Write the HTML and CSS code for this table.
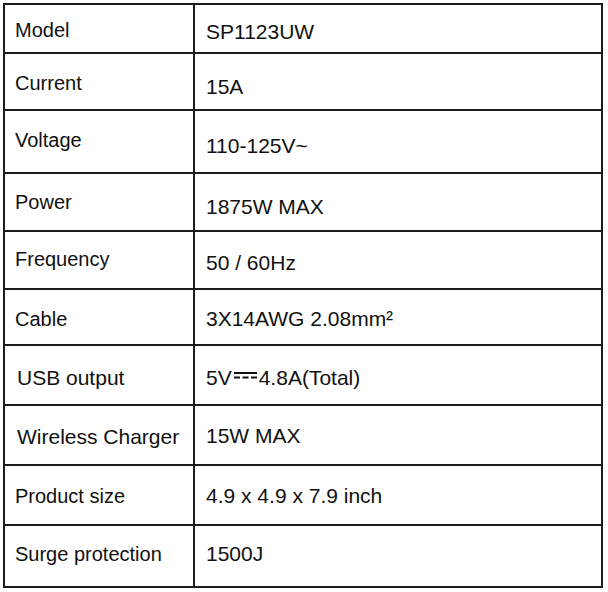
FILE: index.html
```html
<!DOCTYPE html>
<html lang="en">
<head>
<meta charset="utf-8">
<title>Specifications</title>
<link rel="stylesheet" href="styles.css">
</head>
<body>
<div class="spec">
  <div class="cell key sh2">Model</div>
  <div class="cell val sh3">SP1123UW</div>

  <div class="cell key sh2">Current</div>
  <div class="cell val sh5">15A</div>

  <div class="cell key su1">Voltage</div>
  <div class="cell val sh4">110-125V~</div>

  <div class="cell key">Power</div>
  <div class="cell val sh4">1875W MAX</div>

  <div class="cell key su1">Frequency</div>
  <div class="cell val sh2">50 / 60Hz</div>

  <div class="cell key sh2">Cable</div>
  <div class="cell val sh1">3X14AWG 2.08mm²</div>

  <div class="cell key wide sh2">USB output</div>
  <div class="cell val sh2"><span class="txt">5V<svg class="dc" width="25" height="14" viewBox="0 0 25 14" aria-hidden="true"><line x1="1" y1="2" x2="24" y2="2"/><line x1="1" y1="6.5" x2="7" y2="6.5"/><line x1="9.5" y1="6.5" x2="15.5" y2="6.5"/><line x1="18" y1="6.5" x2="24" y2="6.5"/></svg>4.8A(Total)</span></div>

  <div class="cell key wide sh1">Wireless Charger</div>
  <div class="cell val">15W MAX</div>

  <div class="cell key sh1">Product size</div>
  <div class="cell val">4.9 x 4.9 x 7.9 inch</div>

  <div class="cell key last su2">Surge protection</div>
  <div class="cell val last su3">1500J</div>
</div>
</body>
</html>
```

FILE: styles.css
```css
html, body {
  margin: 0;
  padding: 0;
  background: #ffffff;
}

body {
  font-family: "Liberation Sans", Arial, sans-serif;
  color: #111111;
}

.spec {
  margin: 3px 0 0 3px;
  width: 600px;
  box-sizing: border-box;
  border: 2px solid #1c1c1c;
  display: grid;
  grid-template-columns: 190px 1fr;
  grid-template-rows: 49px 57px 63px 58px 58px 56px 60px 60px 60px 60px;
}

.cell {
  display: flex;
  align-items: center;
  box-sizing: border-box;
  border-bottom: 2px solid #1c1c1c;
  white-space: nowrap;
  line-height: 23px;
}

.cell.last {
  border-bottom: none;
}

.key {
  border-right: 2px solid #1c1c1c;
  padding-left: 10px;
  font-size: 20px;
}

.key.wide {
  padding-left: 12px;
  font-size: 21px;
}

.val {
  padding-left: 11px;
  font-size: 21px;
}

.txt {
  display: inline;
}

.dc {
  display: inline-block;
  vertical-align: baseline;
  margin: 0 1px;
  stroke: #111111;
  stroke-width: 2;
  fill: none;
}

/* vertical nudges: shift text down / up by half the padding */
.sh1 { padding-top: 2px; }
.sh2 { padding-top: 4px; }
.sh3 { padding-top: 6px; }
.sh4 { padding-top: 8px; }
.sh5 { padding-top: 10px; }
.su1 { padding-bottom: 2px; }
.su2 { padding-bottom: 4px; }
.su3 { padding-bottom: 6px; }
```
